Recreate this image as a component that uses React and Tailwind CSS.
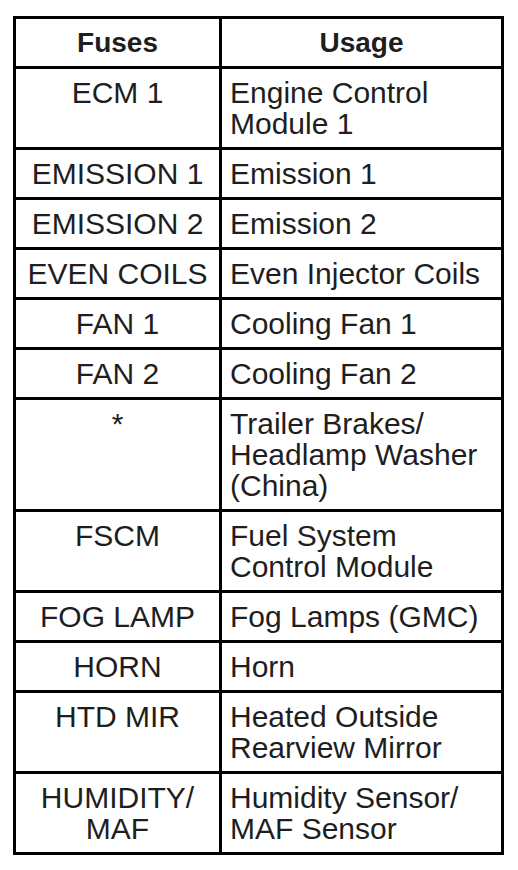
const rows = [
  ["ECM 1", "Engine Control\nModule 1"],
  ["EMISSION 1", "Emission 1"],
  ["EMISSION 2", "Emission 2"],
  ["EVEN COILS", "Even Injector Coils"],
  ["FAN 1", "Cooling Fan 1"],
  ["FAN 2", "Cooling Fan 2"],
  ["*", "Trailer Brakes/\nHeadlamp Washer\n(China)"],
  ["FSCM", "Fuel System\nControl Module"],
  ["FOG LAMP", "Fog Lamps (GMC)"],
  ["HORN", "Horn"],
  ["HTD MIR", "Heated Outside\nRearview Mirror"],
  ["HUMIDITY/\nMAF", "Humidity Sensor/\nMAF Sensor"],
];

const App = () => {
  return (
    <div className="min-h-[870px] bg-white pl-[13px] pt-[16px] font-['Liberation_Sans',Arial,Helvetica,sans-serif] text-[#1e1e1e]">
      <div className="grid w-[491px] grid-cols-[203px_1fr] gap-[3px] border-[3px] border-black bg-black">
        {/* header */}
        <div className="bg-white py-2 text-center text-[28px] leading-[31px] font-bold">Fuses</div>
        <div className="bg-white py-2 text-center text-[28px] leading-[31px] font-bold">Usage</div>

        {rows.map(([fuse, usage]) => (
          <div key={fuse} className="contents">
            <div className="whitespace-pre-line bg-white py-2 text-center text-[30px] leading-[31px]">
              {fuse}
            </div>
            <div className="whitespace-pre-line bg-white py-2 pl-2 text-[30px] leading-[31px]">
              {usage}
            </div>
          </div>
        ))}
      </div>
    </div>
  );
};

export default App;
